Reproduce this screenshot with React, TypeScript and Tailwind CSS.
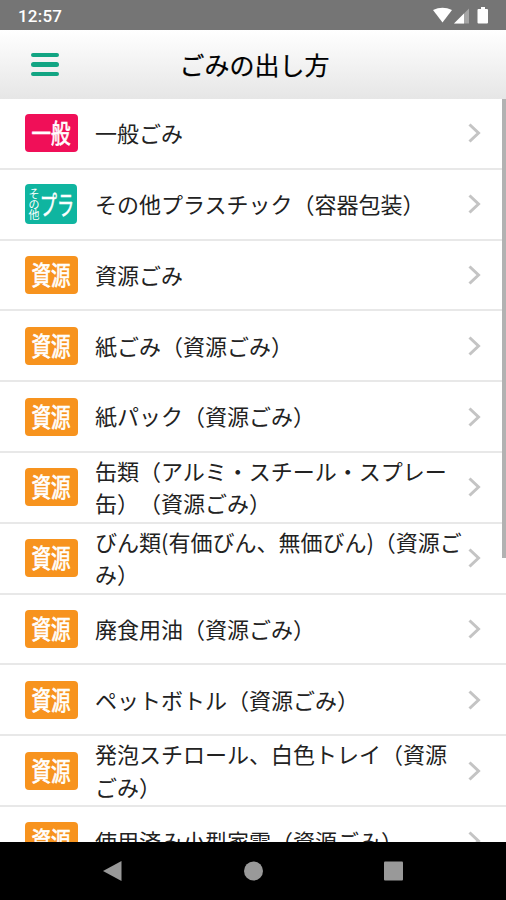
import React from 'react'

type BadgeKind = 'general' | 'plastic' | 'resource'

interface GarbageItem {
  kind: BadgeKind
  lines: string[]
}

const items: GarbageItem[] = [
  { kind: 'general', lines: ['一般ごみ'] },
  { kind: 'plastic', lines: ['その他プラスチック（容器包装）'] },
  { kind: 'resource', lines: ['資源ごみ'] },
  { kind: 'resource', lines: ['紙ごみ（資源ごみ）'] },
  { kind: 'resource', lines: ['紙パック（資源ごみ）'] },
  { kind: 'resource', lines: ['缶類（アルミ・スチール・スプレー', '缶）（資源ごみ）'] },
  { kind: 'resource', lines: ['びん類(有価びん、無価びん)（資源ご', 'み）'] },
  { kind: 'resource', lines: ['廃食用油（資源ごみ）'] },
  { kind: 'resource', lines: ['ペットボトル（資源ごみ）'] },
  { kind: 'resource', lines: ['発泡スチロール、白色トレイ（資源', 'ごみ）'] },
  { kind: 'resource', lines: ['使用済み小型家電（資源ごみ）'] },
]

const StatusBar: React.FC = () => (
  <div className="h-[30px] shrink-0 bg-[#757575] flex items-center justify-between pl-[18px] pr-4 text-white">
    <span className="font-['Roboto',sans-serif] font-medium text-[17px] leading-none pt-[2px] tracking-[0.2px]">12:57</span>
    <svg width="58" height="18" viewBox="0 0 58 18" fill="currentColor">
      <path d="M1 4Q10.500-0.500 20 4L10.500 16.500Z" />
      <path d="M37 2.500V17.500H22Z" opacity=".35" />
      <path d="M32 7.500V17.500H22Z" />
      <path d="M46.500 3H49V1h4v2h2q1 0 1 1v12.500q0 1-1 1h-8.500q-1 0-1-1V4q0-1 1-1Z" />
    </svg>
  </div>
)

const Header: React.FC = () => (
  <header className="h-[69px] shrink-0 bg-gradient-to-b from-white to-[#e6e6e6] grid grid-cols-[90px_1fr_90px] items-center">
    <button className="ml-[31px] w-[28px] flex flex-col gap-[5px]" aria-label="メニュー">
      <span className="h-[4.500px] w-full rounded-full bg-[#12a583]" />
      <span className="h-[4.500px] w-full rounded-full bg-[#12a583]" />
      <span className="h-[4.500px] w-full rounded-full bg-[#12a583]" />
    </button>
    <h1 className="text-center text-[25px] leading-[36px] font-normal text-black pl-[3px] pb-[2px] [-webkit-text-stroke:0.2px_black]">ごみの出し方</h1>
  </header>
)

const Badge: React.FC<{ kind: BadgeKind }> = ({ kind }) => {
  if (kind === 'plastic') {
    return (
      <div className="w-[52px] h-[40px] rounded-[4px] bg-[#0fb5a0] text-white flex items-center justify-center overflow-hidden">
        <div className="w-[12px] flex flex-col items-center text-[11px] leading-[10.500px] font-normal">
          <span>そ</span>
          <span>の</span>
          <span>他</span>
        </div>
        <div className="w-[34px] flex justify-center">
          <span className="text-[26px] leading-[36px] font-normal whitespace-nowrap scale-x-[0.66] [-webkit-text-stroke:0.5px_white]">プラ</span>
        </div>
      </div>
    )
  }
  const general = kind === 'general'
  return (
    <div
      className={`w-[53px] h-[38px] rounded-[4px] text-white flex items-center justify-center overflow-hidden pb-[2px] ${
        general ? 'bg-[#f00f58]' : 'bg-[#f7931e]'
      }`}
    >
      <span className="text-[26px] leading-[36px] font-normal whitespace-nowrap scale-x-[0.75] [-webkit-text-stroke:0.7px_white]">
        {general ? '一般' : '資源'}
      </span>
    </div>
  )
}

const ItemRow: React.FC<{ item: GarbageItem }> = ({ item }) => (
  <li className="h-[70.800px] shrink-0 flex items-center border-b-2 border-[#e8e8e8] pl-[25px] pr-[25px]">
    <div className="w-[70px] shrink-0">
      <Badge kind={item.kind} />
    </div>
    <div className="flex-1 min-w-0 pb-[2px] text-[22px] leading-[32.500px] text-[#222] whitespace-nowrap">
      {item.lines.map(line => (
        <div key={line}>{line}</div>
      ))}
    </div>
    <svg className="shrink-0" width="13" height="20" viewBox="0 0 13 20" fill="none" stroke="#c4c4c4" strokeWidth="3">
      <path d="M1.500 1.500L10.500 10L1.500 18.500" />
    </svg>
  </li>
)

const NavBar: React.FC = () => (
  <nav className="h-[58px] shrink-0 bg-black flex items-center justify-center">
    <svg width="300" height="22" viewBox="0 0 300 22" fill="#999">
      <path d="M0 11L18.500 1V21Z" />
      <circle cx="150.500" cy="11" r="9.500" />
      <rect x="281" y="1.500" width="19" height="19" rx="1" />
    </svg>
  </nav>
)

const App: React.FC = () => {
  return (
    <div className="w-[506px] h-[900px] flex flex-col overflow-hidden bg-white font-['Noto_Sans_CJK_JP','Noto_Sans',sans-serif] [text-spacing-trim:space-all]">
      <StatusBar />
      <Header />
      <main className="relative flex-1 min-h-0 overflow-hidden">
        <ul className="flex flex-col">
          {items.map((item, i) => (
            <ItemRow key={i} item={item} />
          ))}
        </ul>
        {/* scroll thumb over the list */}
        <div className="absolute top-0 right-0 w-[4px] h-[459px] bg-[#b2b2b2]" />
      </main>
      <NavBar />
    </div>
  )
}

export default App
